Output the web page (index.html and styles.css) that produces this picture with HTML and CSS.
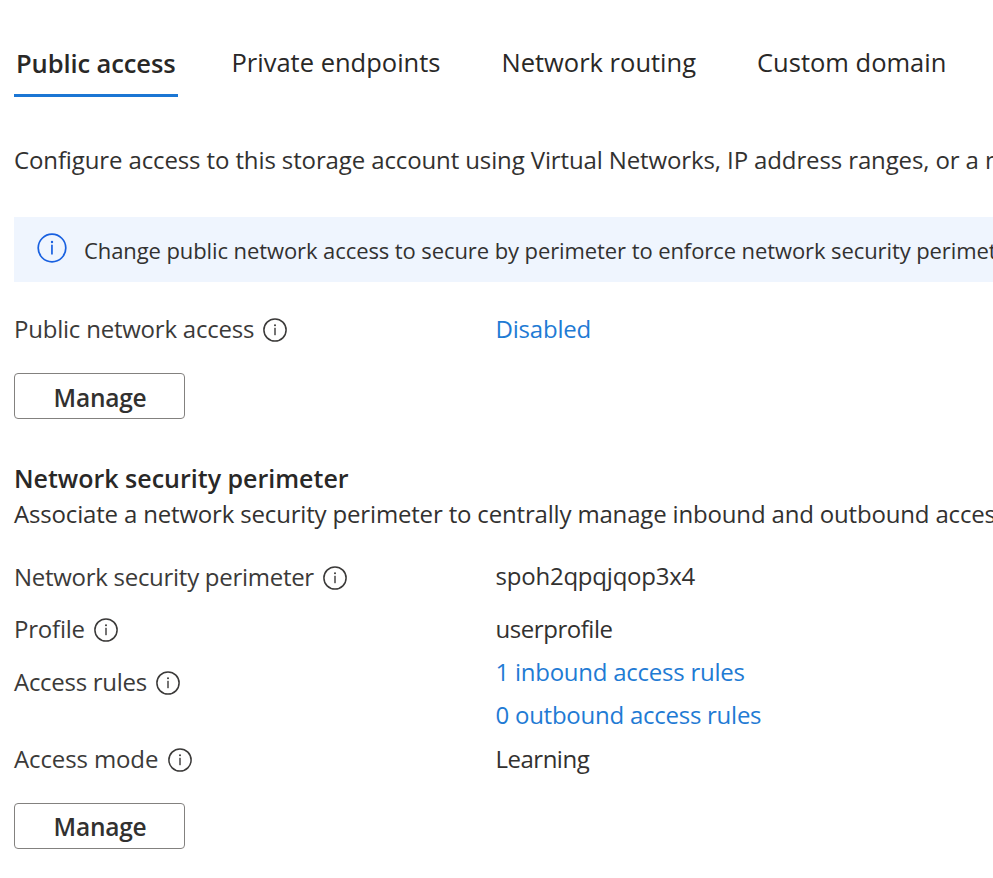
FILE: index.html
```html
<!DOCTYPE html>
<html lang="en">
<head>
<meta charset="utf-8">
<title>Networking</title>
<link rel="stylesheet" href="styles.css">
</head>
<body>
<svg class="defs" aria-hidden="true">
  <symbol id="info" viewBox="0 0 24 24">
    <circle cx="12" cy="12" r="11.1" fill="none" stroke="currentColor" stroke-width="1.5"/>
    <rect x="11.3" y="9.8" width="1.4" height="7.4" fill="currentColor"/>
    <circle cx="12" cy="7.2" r="1" fill="currentColor"/>
  </symbol>
</svg>
<main class="page">
  <nav class="tabs">
    <a class="tab active">Public access</a>
    <a class="tab">Private endpoints</a>
    <a class="tab">Network routing</a>
    <a class="tab">Custom domain</a>
  </nav>
  <p class="intro">Configure access to this storage account using Virtual Networks, IP address ranges, or a n</p>
  <div class="notice">
    <svg class="notice-icon" viewBox="0 0 30 30"><circle cx="15" cy="15" r="13.8" fill="none" stroke="currentColor" stroke-width="1.7"/><rect x="14.1" y="11.7" width="1.7" height="9.8" fill="currentColor"/><circle cx="15" cy="9" r="1.2" fill="currentColor"/></svg>
    <span>Change public network access to secure by perimeter to enforce network security perimeter</span>
  </div>
  <div class="row access">
    <div class="label"><span class="ls-2">Public network access</span><svg class="info"><use href="#info"/></svg></div>
    <a class="link disabled">Disabled</a>
  </div>
  <button class="button">Manage</button>
  <h2 class="heading">Network security perimeter</h2>
  <p class="description">Associate a network security perimeter to centrally manage inbound and outbound access</p>
  <div class="row perimeter">
    <div class="label"><span class="ls-3">Network security perimeter</span><svg class="info"><use href="#info"/></svg></div>
    <span class="value ls-2">spoh2qpqjqop3x4</span>
  </div>
  <div class="row profile">
    <div class="label"><span class="ls-2">Profile</span><svg class="info"><use href="#info"/></svg></div>
    <span class="value ls-4">userprofile</span>
  </div>
  <div class="row rules">
    <div class="label"><span class="ls-3">Access rules</span><svg class="info"><use href="#info"/></svg></div>
    <div class="links">
      <a class="link">1 inbound access rules</a>
      <a class="link">0 outbound access rules</a>
    </div>
  </div>
  <div class="row mode">
    <div class="label"><span class="ls-1">Access mode</span><svg class="info"><use href="#info"/></svg></div>
    <span class="value ls-5">Learning</span>
  </div>
  <button class="button last">Manage</button>
</main>
</body>
</html>
```
FILE: styles.css
```css
* { box-sizing: border-box; }
html, body { margin: 0; overflow: hidden; background: #fff; }
body {
  font: 24px/34px "Open Sans", "Noto Sans", sans-serif;
  color: #323130;
  height: 878px;
}
.defs { display: none; }
.page { padding: 44px 0 0 14px; }
.tabs { display: flex; height: 53px; white-space: nowrap; }
.tab { flex: none; font-size: 25.5px; line-height: 36px; color: #292827; margin-right: 61px; }
.tab.active {
  width: 164px;
  margin-right: 53.5px;
  padding: 1px 0 0 2px;
  font-weight: 600;
  letter-spacing: -0.1px;
  border-bottom: 3px solid #1b76d4;
}
p { margin: 0; white-space: nowrap; }
.intro { margin-top: 46px; letter-spacing: -0.12px; }
.notice {
  display: flex;
  align-items: center;
  height: 65px;
  margin-top: 40px;
  padding-left: 23px;
  background: #eff5fe;
  font-size: 22px;
  letter-spacing: -0.09px;
  white-space: nowrap;
}
.notice span { padding-top: 1px; }
.notice-icon { width: 30px; height: 30px; margin: 0 17px 3px 0; color: #1860e0; flex: none; }
.row { display: grid; grid-template-columns: 481.5px 1fr; }
.label { display: flex; gap: 9.5px; height: 34px; color: #3b3a39; }
.info { width: 24px; height: 24px; margin-top: 6px; overflow: visible; flex: none; }
.link { color: #1f7bd4; letter-spacing: -0.25px; }
.disabled { letter-spacing: -0.2px; }
.access { margin-top: 30px; }
.access .label { gap: 8.5px; }
.profile .label { gap: 9px; }
.button {
  display: block;
  width: 171px;
  height: 46px;
  margin-top: 27px;
  padding: 3px 0 0 1px;
  border: 1px solid #83817f;
  border-radius: 4px;
  background: #fff;
  color: #323130;
  font: 600 24.5px/34px "Open Sans", "Noto Sans", sans-serif;
  letter-spacing: -0.25px;
}
.button.last { padding-top: 2px; }
.heading { margin: 42px 0 0; font-size: 25px; line-height: 34px; font-weight: 600; color: #292827; }
.description { margin-top: 2px; letter-spacing: -0.17px; }
.perimeter { margin-top: 28px; height: 35px; }
.perimeter .label { margin-top: 1px; }
.perimeter .info { margin-top: 5.7px; }
.profile { margin-top: 18px; }
.rules { margin-top: 9px; }
.rules .label { margin-top: 10px; }
.rules .info { margin-top: 5.7px; }
.links { display: flex; flex-direction: column; gap: 9px; }
.mode { margin-top: 10px; }
.ls-1 { letter-spacing: -0.12px; }
.ls-2 { letter-spacing: -0.22px; }
.ls-3 { letter-spacing: -0.28px; }
.ls-4 { letter-spacing: -0.45px; }
.ls-5 { letter-spacing: -0.5px; }
```
